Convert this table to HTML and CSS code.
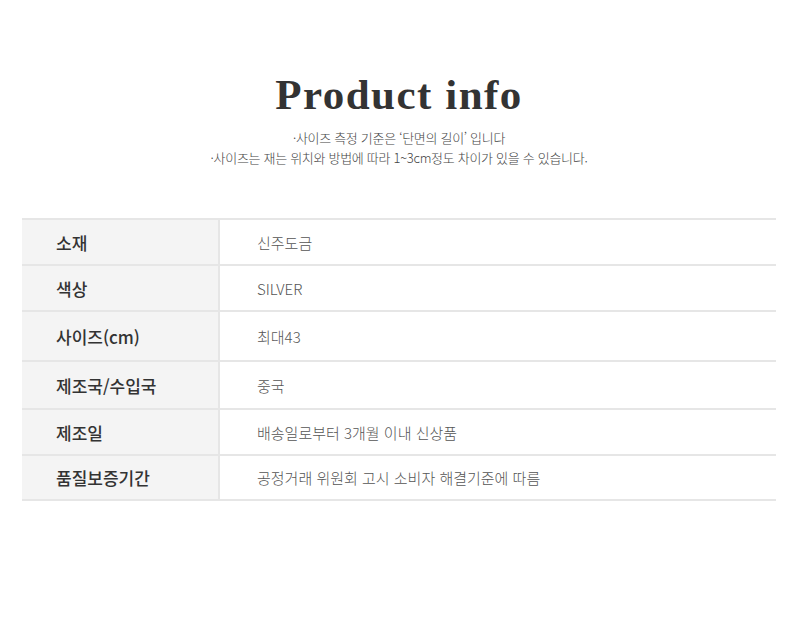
FILE: index.html
```html
<!DOCTYPE html>
<html lang="ko">
<head>
<meta charset="utf-8">
<link rel="stylesheet" href="styles.css">
</head>
<body>
<div class="page">
  <h1 class="title">Product info</h1>
  <p class="note">·사이즈 측정 기준은 ‘단면의 길이’ 입니다</p>
  <p class="note">·사이즈는 재는 위치와 방법에 따라 1~3cm정도 차이가 있을 수 있습니다.</p>
  <div class="table">
    <div class="row r1"><div class="label">소재</div><div class="value">신주도금</div></div>
    <div class="row r2"><div class="label">색상</div><div class="value">SILVER</div></div>
    <div class="row r3"><div class="label">사이즈(cm)</div><div class="value">최대43</div></div>
    <div class="row r4"><div class="label">제조국/수입국</div><div class="value">중국</div></div>
    <div class="row r5"><div class="label">제조일</div><div class="value">배송일로부터 3개월 이내 신상품</div></div>
    <div class="row r6"><div class="label">품질보증기간</div><div class="value">공정거래 위원회 고시 소비자 해결기준에 따름</div></div>
  </div>
</div>
</body>
</html>
```

FILE: styles.css
```css
html, body {
  margin: 0;
  padding: 0;
  background: #fff;
}
.page {
  padding: 70px 24px 0 22px;
  font-family: "Noto Sans CJK KR", "Noto Sans", sans-serif;
}
.title {
  margin: 0 0 8px;
  text-align: center;
  font-family: "Liberation Serif", serif;
  font-weight: bold;
  font-size: 43px;
  line-height: 50px;
  letter-spacing: 1.5px;
  color: #333;
}
.note {
  margin: 0;
  text-align: center;
  font-size: 13px;
  font-weight: 300;
  line-height: 20px;
  color: #444;
  letter-spacing: -0.3px;
}
.table {
  margin-top: 50px;
  border-top: 2px solid #e6e6e6;
}
.row {
  display: flex;
  border-bottom: 2px solid #e6e6e6;
}
.r1 { height: 44px; }
.r2 { height: 44px; }
.r3 { height: 48px; }
.r4 { height: 46px; }
.r5 { height: 44px; }
.r6 { height: 43px; }
.label {
  width: 198px;
  flex: none;
  background: #f4f4f4;
  border-right: 2px solid #e6e6e6;
  display: flex;
  align-items: center;
  padding-left: 34px;
  box-sizing: border-box;
  font-size: 17px;
  font-weight: 500;
  color: #333;
}
.value {
  display: flex;
  align-items: center;
  padding-left: 37px;
  font-size: 15px;
  font-weight: 300;
  color: #555;
}
```
